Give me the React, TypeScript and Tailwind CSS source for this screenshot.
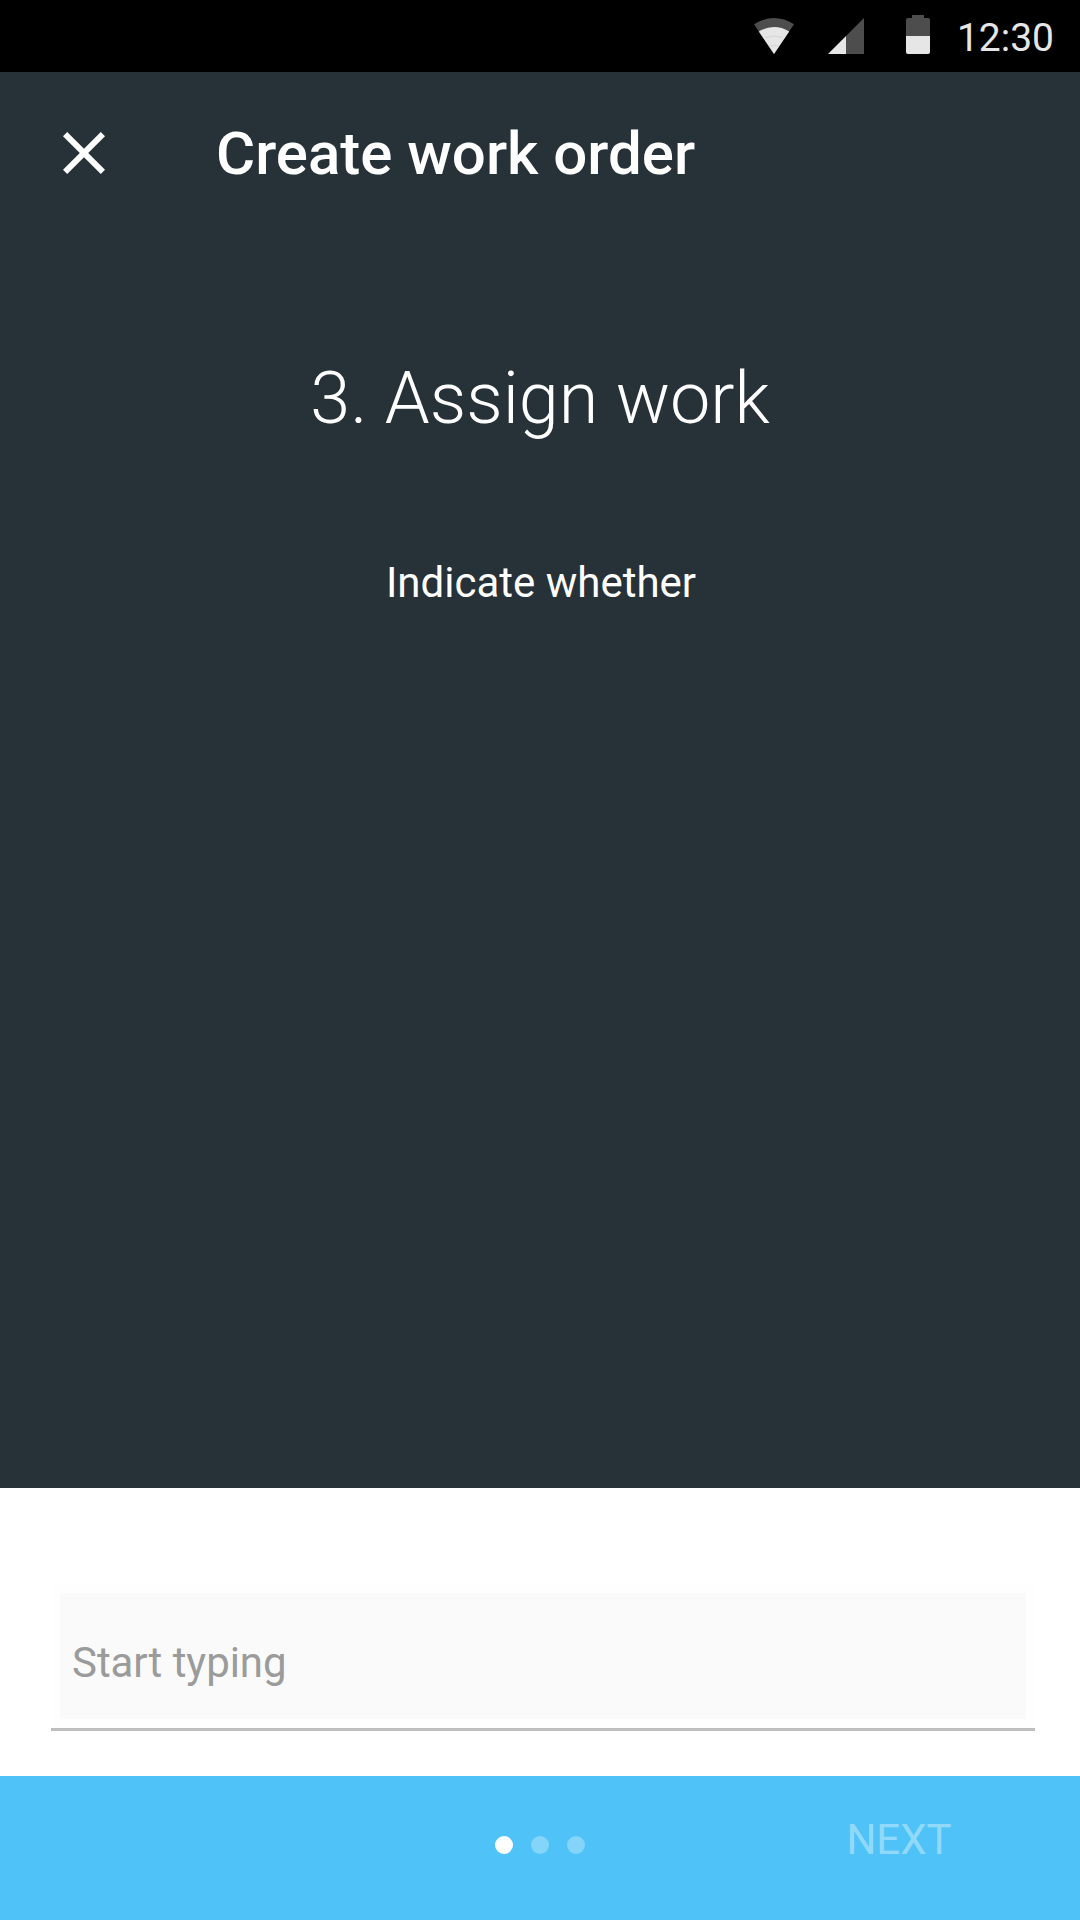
export default function App() {
  return (
    <div className="flex h-[1920px] w-[1080px] flex-col overflow-hidden bg-[#263238] font-[Roboto,sans-serif] text-white">
      <div className="flex h-[72px] shrink-0 items-start justify-end bg-black pr-[26px]">
        <svg className="mt-[18px] mr-[34px]" width="40" height="36" viewBox="0 0 40 36">
          <path d="M0 6.3Q20-6.3 40 6.3L20 36Z" fill="#4d4d4d" />
          <path d="M4.8 13.4Q20 4.6 35.2 13.4L20 36Z" fill="#e6e6e6" />
          <path d="M11.5 19.5Q20 16.5 28.5 19.5M15.5 28Q20 26.5 24.5 28" fill="none" stroke="#cfcfcf" strokeWidth="0.8" />
        </svg>
        <svg className="mt-[18px] mr-[42px]" width="36" height="36" viewBox="0 0 36 36">
          <path d="M36 0V36H18V18Z" fill="#4d4d4d" />
          <path d="M18 18V36H0Z" fill="#e6e6e6" />
        </svg>
        <svg className="mt-[15px]" width="24" height="39" viewBox="0 0 24 39">
          <path d="M6 0H18V3H22Q24 3 24 5V21H0V5Q0 3 2 3H6Z" fill="#4d4d4d" />
          <path d="M0 21H24V37Q24 39 22 39H2Q0 39 0 37Z" fill="#e6e6e6" />
        </svg>
        <span className="w-[124px] pt-[15px] text-right text-[39px] leading-[46px] text-[#e6e6e6]">12:30</span>
      </div>
      <header className="flex h-[162px] shrink-0 items-center pl-[63px]">
        <svg width="42" height="42" viewBox="0 0 42 42" fill="#fff">
          <path d="M42 4.2L37.8 0 21 16.8 4.2 0 0 4.2 16.8 21 0 37.8 4.2 42 21 25.2 37.8 42 42 37.8 25.2 21Z" />
        </svg>
        <h1 className="ml-[111px] pt-px text-[60px] leading-[61px] font-medium">Create work order</h1>
      </header>
      <main className="flex flex-1 flex-col items-center">
        <h2 className="mt-[128px] text-[72px] leading-[73px] font-light tracking-[-0.05px]">3. Assign work</h2>
        <p className="mt-[123px] pl-[2px] text-[42px] leading-[49px]">Indicate whether</p>
      </main>
      <section className="h-[288px] shrink-0 bg-white pt-[96px] pr-[45px] pl-[51px]">
        <div className="h-[147px] border-b-3 border-[#bfbfbf] bg-[#fefefe] p-[9px]">
          <div className="h-[126px] bg-[#fafafa] px-3 pt-[45px] text-[42px] leading-[49px] tracking-[-0.05px] text-[#9b9b9b]">Start typing</div>
        </div>
      </section>
      <footer className="grid h-[144px] shrink-0 grid-cols-3 items-start bg-[#4fc3f7]">
        <span />
        <div className="flex justify-center gap-[18px] pt-[60px]">
          <i className="size-[18px] rounded-full bg-white" />
          <i className="size-[18px] rounded-full bg-white/30" />
          <i className="size-[18px] rounded-full bg-white/30" />
        </div>
        <button className="pt-[39px] pr-[2px] text-center text-[42px] leading-[49px] text-white/40">NEXT</button>
      </footer>
    </div>
  );
}
